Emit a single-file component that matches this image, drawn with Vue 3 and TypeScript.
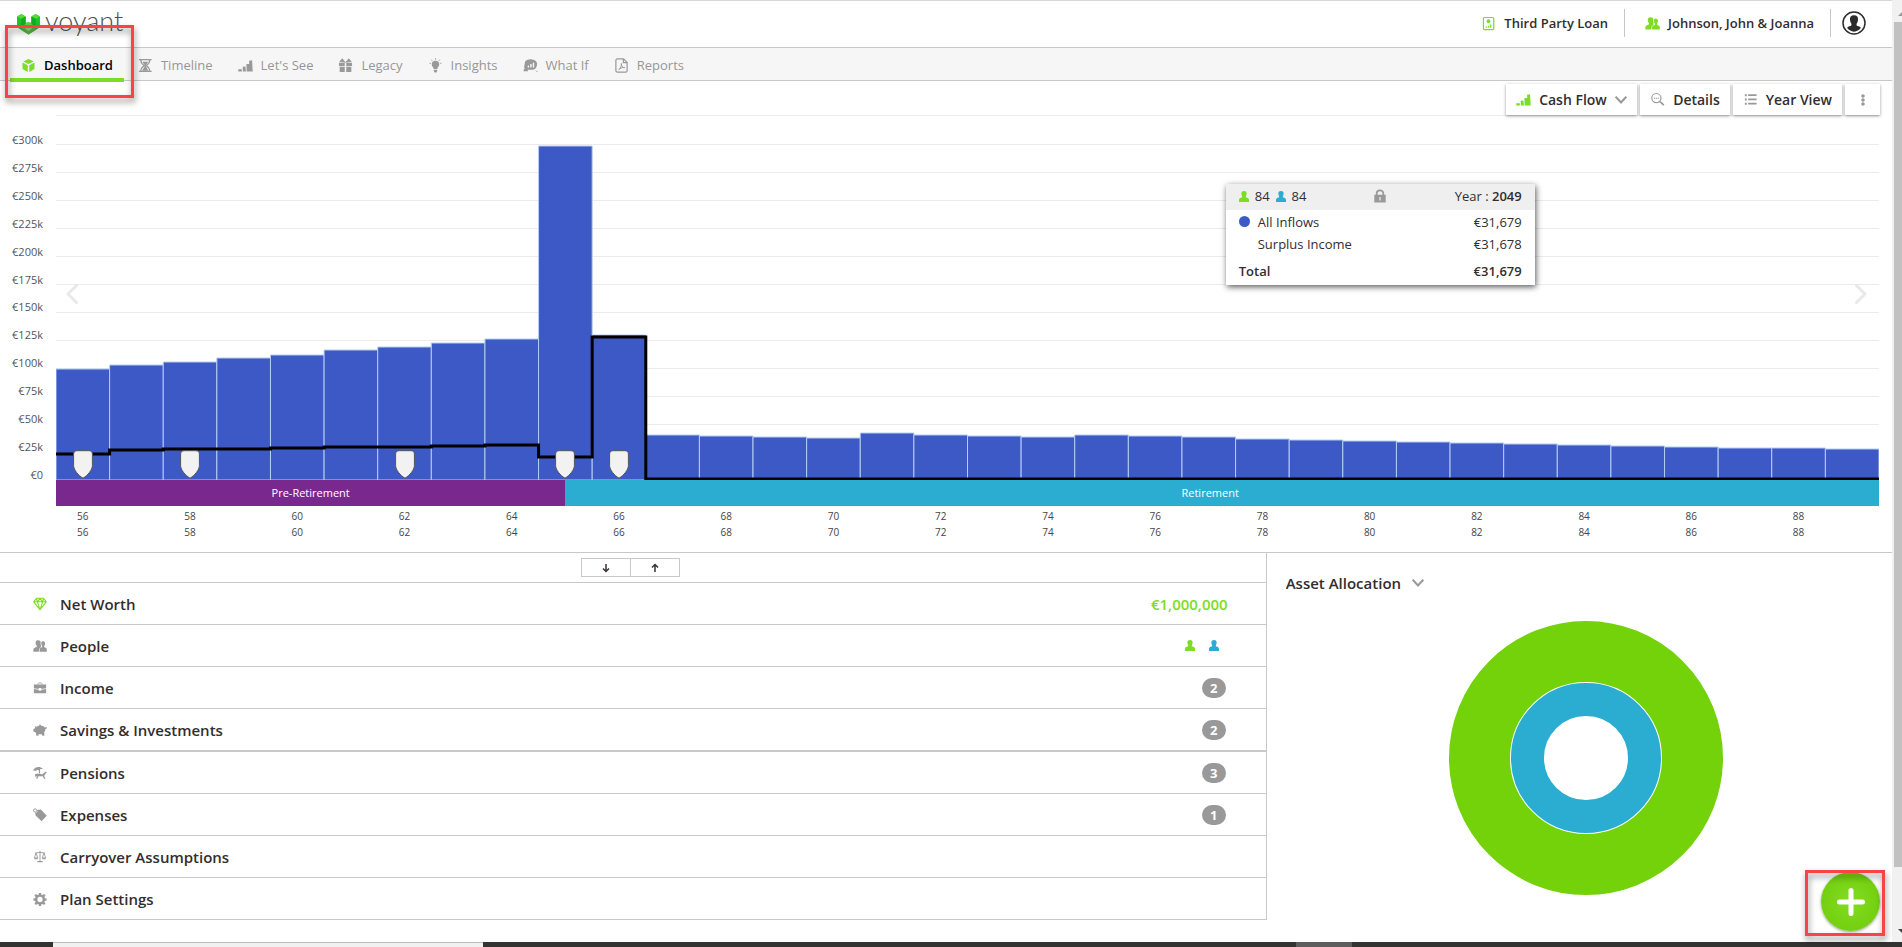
<script setup lang="ts">
import { ref } from 'vue'

interface NavItem { label: string; icon: string; active?: boolean }
interface PlanRow { label: string; icon: string; count?: number; worth?: string; people?: boolean; green?: boolean; heavy?: boolean }

const navItems: NavItem[] = [
  { label: 'Dashboard', icon: 'cube', active: true },
  { label: 'Timeline', icon: 'hourglass' },
  { label: "Let's See", icon: 'bars' },
  { label: 'Legacy', icon: 'gift' },
  { label: 'Insights', icon: 'bulb' },
  { label: 'What If', icon: 'whatif' },
  { label: 'Reports', icon: 'report' },
]

const rows: PlanRow[] = [
  { label: 'Net Worth', icon: 'gem', worth: '€1,000,000', green: true },
  { label: 'People', icon: 'people', people: true },
  { label: 'Income', icon: 'briefcase', count: 2 },
  { label: 'Savings & Investments', icon: 'piggy', count: 2, heavy: true },
  { label: 'Pensions', icon: 'beach', count: 3 },
  { label: 'Expenses', icon: 'tag', count: 1 },
  { label: 'Carryover Assumptions', icon: 'scales' },
  { label: 'Plan Settings', icon: 'gear' },
]

const axis = [300, 275, 250, 225, 200, 175, 150, 125, 100, 75, 50, 25, 0]
const firstAge = 56
const plotHeight = 365

// Height of each yearly bar above the base line, in chart units.
const inflows = [
  111, 115, 118, 122, 125, 130, 133, 137, 141, 334, 145, 45, 44, 43, 42, 47, 45,
  44, 43, 45, 44, 43, 41, 40, 39, 38, 37, 36, 35, 34, 33, 32, 32, 31,
]
const expenses = [26, 30, 31, 31, 32, 33, 33, 34, 35, 23, 143, ...Array(23).fill(1)] as number[]
const eventAges = [56, 58, 62, 65, 66]
const ages = Array.from({ length: 17 }, (_, i) => firstAge + i * 2)

const expensePath = expenses
  .map((v, i) => `${i ? 'L' : 'M'}${i} ${plotHeight - v} H${i + 1}`)
  .join(' ')

const markerLeft = (age: number) => `${((age - firstAge + 0.5) / inflows.length) * 100}%`

const view = ref('Cash Flow')
const breakdown = ref('Asset Allocation')
</script>

<template>
  <svg class="defs" aria-hidden="true">
    <symbol id="cube" viewBox="0 0 16 16"><path d="M8 1l5.6 2.6L8 6.400 2.400 3.600zM1.600 4.800l5.600 2.800v7.400l-5.600-3.200zM14.400 4.800v7L8.800 15V7.600z" /></symbol>
    <symbol id="hourglass" viewBox="0 0 16 16"><path fill="none" stroke="currentColor" stroke-width="1.300" d="M1 1.700h13.500M1 14.300h13.500M3 2c0 3.500 2 4.800 3.600 6C5 9.200 3 10.500 3 14M12.500 2c0 3.500-2 4.800-3.600 6 1.600 1.200 3.600 2.500 3.600 6" /><path d="M4.600 4h6.300L8.400 7.500 8.500 9l2.700 4.500H4.300L7 9V7.500z" /></symbol>
    <symbol id="bars" viewBox="0 0 16 16"><path d="M.3 12h3.800v2.300H.3zM5 9.300l3-.3.400 5.300H5.200zM9 6.500h3l.3 7.800H9.200zM11.800 3l3.200-.5.700 11.800h-3.400z" /></symbol>
    <symbol id="gift" viewBox="0 0 16 16"><path d="M1 5h6.200v3.400H1zM8.800 5H15v3.400H8.800zM1.800 9.400h5.400V15H1.800zM8.800 9.400h5.400V15H8.800z" /><path fill="currentColor" stroke="currentColor" stroke-width="1.200" d="M7 4.300L2.500 3.500 4.500 1.200zM9 4.300l4.500-.8-2-2.300z" /></symbol>
    <symbol id="bulb" viewBox="0 0 16 16"><path d="M8 3a4 4 0 0 1 4 4c0 2-1.700 2.500-2 4.700H6C5.700 9.500 4 9 4 7a4 4 0 0 1 4-4zM6.200 12.500h3.600v1.300L9 15.500H7l-.8-1.700z" /><path stroke="currentColor" d="M8 .3v1.500M3.400 1.800l1 1.200M12.600 1.800l-1 1.200M1.600 5.500l1.400.3M14.400 5.500l-1.400.3" /></symbol>
    <symbol id="whatif" viewBox="0 0 16 16"><path fill-rule="evenodd" d="M4.200 2.200Q8 .600 12 2.200q2.500.8 3 3.300.3 3-1.500 5.500-1 1.500-3 1.500h-6Q1.500 12 1.300 10 1 8 1.800 7 1.500 3.500 4.200 2.200zM5 10h1.500V8H5zm2.700 0h1.500V6.500H7.700zm2.700 0h1.500V5h-1.500z" /><path d="M1 11.500h3.500l1 2.500H.6zM13 13l2.700 1.300-.7 1z" /></symbol>
    <symbol id="report" viewBox="0 0 16 16"><path fill="none" stroke="currentColor" stroke-width="1.300" d="M3.500 1h6.700L14 4.800v8.700a1.500 1.500 0 0 1-1.500 1.500h-9A1.500 1.500 0 0 1 2 13.500v-11A1.500 1.500 0 0 1 3.500 1zM10 1v4h4" /><path fill="none" stroke="currentColor" d="M5 12.300c2-1.200 3.200-4 2.800-6.500C8 9 9.500 10.500 11.500 10.300c-2.500-.4-4.500.4-6.500 2z" /></symbol>
    <symbol id="gem" viewBox="0 0 16 16"><path fill="none" stroke="currentColor" stroke-width="1.200" stroke-linejoin="round" d="M4 1.500h8l3.200 4L8 14.500.8 5.500zM.8 5.500h14.400M5 5.500l3 9 3-9M4 1.500l1 4 3-4 3 4 1-4" /></symbol>
    <symbol id="people" viewBox="0 0 16 16"><path d="M9.300 7.200c-.6.9-.5 1.700.2 2.200-2.300.8-2.800 2-2.800 5.100H.4v-2.300c0-1.800 1-2.200 3.600-3.200.6-.5.400-1-.1-1.800C2 3.600 3.300 1.300 5.900 1.300c1.700 0 2.800.9 3 2.300-.6 1-.4 2.500.4 3.600z" /><path d="M11 2.600c2.600 0 3.500 2.400 2.200 4.900-.7 1-.5 1.600 0 2 1.700.7 2.600 1 2.600 2.700v2.300H7.500v-2.300c0-1.700.9-2 2.700-2.700.5-.4.500-1-.1-2C8.900 5 9.400 2.600 11 2.600z" /></symbol>
    <symbol id="person" viewBox="0 0 10 11"><path d="M5 0c1.900 0 2.900 1.300 2.600 3C7.400 4.400 6.800 5 6.800 6.200 9 6.800 10 7.300 10 9v2H0V9c0-1.700 1-2.200 3.200-2.800C3.200 5 2.600 4.400 2.400 3 2.100 1.300 3.100 0 5 0z" /></symbol>
    <symbol id="briefcase" viewBox="0 0 16 16"><path d="M1 4h14v4.200L9.500 9V8h-3v1L1 8.200zM1 9.200l5.500.8v1h3v-1l5.500-.8V14H1z" /><path fill="none" stroke="currentColor" d="M5.500 4c0-2.600 5-2.600 5 0" /></symbol>
    <symbol id="piggy" viewBox="0 0 16 16"><path d="M.3 7.500l2.200-1.800-.5-2 2.500.6C5.500 3.200 6.800 3 7 3l.8-2 1.700 2c2.500 0 4 1.300 4.300 3 .6-.3.400-1 .2-1.700l1.800.5c0 1.400-.6 2.200-1.700 2.400 0 1.500-.6 2.500-1.300 3.300l.2 4h-2.300l-.6-1.600H6.500L6 14.500H3.800l-.3-3.200C2.800 10.500 1.500 10 .5 9.700z" /></symbol>
    <symbol id="beach" viewBox="0 0 16 16"><path d="M0 5.500C1.500 1 7-.5 11.500 3L8 3.700 7 5 4.700 4.200 3.500 5.600 1.500 5zM6.800 4H8v4.500H6.800zM2.500 9.200c3-.7 5.500-.4 8.200.1L14.300 6.500l1.700.4-3.300 4.300 1.500 3.300h-1.500l-1.500-2.700H6l-.8 2.700H3.800l.6-2.800-2 .6z" /></symbol>
    <symbol id="tag" viewBox="0 0 16 16"><path d="M4.300 2.200L9 1.600l6.700 7.200-5.900 6.200L3 8.500l-.5-3.700 1.700.4 1-1z" /><circle cx="2.400" cy="2.800" r="1.900" fill="none" stroke="currentColor" /></symbol>
    <symbol id="scales" viewBox="0 0 16 16"><path fill="none" stroke="currentColor" d="M8 1v12M2 3.500l6-.8 6 .8M3.500 3.500L1.500 9M3.500 3.500l2 5.500M12.500 3.500l-2 5.500M12.500 3.500l2 5.500" /><path d="M1 8.700h5l-1 1.800H2zM10 8.700h5l-1 1.800h-3zM5 12.500h6V14H5z" /></symbol>
    <symbol id="gear" viewBox="0 0 16 16"><path fill-rule="evenodd" d="M6.800 1h2.400l.4 2 1.300.5 1.700-1.200 1.700 1.700-1.200 1.700.5 1.300 2 .4v2.300l-2 .4-.5 1.300 1.200 1.700-1.700 1.700-1.700-1.200-1.300.5-.4 2H6.800l-.4-2-1.300-.5-1.700 1.200-1.700-1.700 1.200-1.700-.5-1.300-2-.4V7.400l2-.4.5-1.300L1.700 4l1.700-1.700 1.700 1.200L6.400 3zM8 5.500a3 3 0 1 0 0 6 3 3 0 0 0 0-6z" /></symbol>
    <symbol id="plan" viewBox="0 0 16 16"><rect x="2.600" y="1.600" width="11" height="13" rx="1.200" fill="none" stroke="currentColor" stroke-width="1.300" /><circle cx="8" cy="5.500" r="2" /><path d="M5 12.500h1.400v-1.300H5zM7.300 12.500h1.400v-2.100H7.300zM9.600 12.500H11V9.100H9.600z" /></symbol>
    <symbol id="search" viewBox="0 0 16 16"><circle cx="6.800" cy="6.500" r="4.900" fill="none" stroke="currentColor" stroke-width="1.200" /><path stroke="currentColor" stroke-width="1.800" d="M10.700 10.200l4 3.700" /><path d="M4.200 6h1.300v1.300H4.200zM6.200 6h1.300v1.300H6.200zM8.200 6h1.300v1.300H8.200z" /></symbol>
    <symbol id="list" viewBox="0 0 16 16"><path d="M2 2.500h2v2H2zM5.500 2.500h9v1.700h-9zM2 7h2v2H2zM5.500 7h9v1.700h-9zM2 11.500h2v2H2zM5.500 11.500h9v1.700h-9z" /></symbol>
    <symbol id="dots" viewBox="0 0 16 16"><circle cx="8" cy="2.700" r="2.400" /><circle cx="8" cy="8" r="2.400" /><circle cx="8" cy="13.300" r="2.400" /></symbol>
    <symbol id="chevron" viewBox="0 0 12 12"><path fill="none" stroke="currentColor" stroke-width="2" d="M.7 2.700L6 8.500l5.300-5.800" /></symbol>
    <symbol id="lock" viewBox="0 0 16 16"><path fill-rule="evenodd" d="M1.500 6.500h13V15.500h-13zM7.300 9v4h1.400V9z" /><path fill="none" stroke="currentColor" stroke-width="2" d="M4.200 7V5.200c0-5 7.600-5 7.600 0V7" /></symbol>
  </svg>

  <div class="window">
    <div class="app">
      <header class="top">
        <a class="brand" href="#">
          <svg class="brand-mark" viewBox="0 0 24 22" aria-hidden="true">
            <path fill="#18c52b" d="M0 2.500L4.500 0 9 2.500V9l3 2 3-2V2.500L19.500 0 24 2.500V14l-12 7.500L0 14z" />
            <path fill="#54dc37" d="M0 2.500L4.500 0 9 2.500 4.500 5zM15 2.500L19.500 0 24 2.500 19.500 5zM5 11l7-3 7 3-7 4z" />
            <path fill="#0fae22" d="M4.500 5L9 2.500v8L4.500 13zM15 2.500L19.500 5v8L15 10.500z" />
            <path fill="#5fb24b" d="M5 12l7 3.500v6L5 17zM12 15.500l7-3.500v5l-7 4.500z" />
            <path fill="#8bdb72" d="M8 15l4-2 4 2-4 3z" />
          </svg>
          <span>voyant</span>
        </a>
        <div class="account">
          <a class="account-link" href="#"><svg class="icon green"><use href="#plan" /></svg>Third Party Loan</a>
          <a class="account-link" href="#"><svg class="icon green"><use href="#people" /></svg>Johnson, John &amp; Joanna</a>
          <button class="avatar" type="button" aria-label="Account">
            <svg viewBox="0 0 24 24"><circle cx="12" cy="12" r="11" fill="none" stroke="#2b2b2b" stroke-width="1.500" /><path fill="#2b2b2b" d="M12 4.200c3 0 4.400 2 4 4.700-.2 2-1.100 3-1.500 4 0 1.500.3 1.800 1.500 2.200 1.500.5 2.500 1 2.800 2A9 9 0 0 1 12 20.700a9 9 0 0 1-6.800-3.600c.3-1 1.300-1.500 2.800-2 1.200-.4 1.500-.7 1.500-2.200-.4-1-1.300-2-1.500-4-.4-2.700 1-4.700 4-4.700z" /></svg>
          </button>
        </div>
      </header>

      <nav class="nav">
        <a v-for="item in navItems" :key="item.label" href="#" class="nav-item" :class="{ active: item.active }">
          <svg class="icon"><use :href="`#${item.icon}`" /></svg>{{ item.label }}
        </a>
      </nav>

      <main>
        <section class="chart">
          <div class="tools">
            <label class="tool">
              <svg class="icon green"><use href="#bars" /></svg>
              <select v-model="view" aria-label="Chart"><option>Cash Flow</option></select>
              <svg class="chevron"><use href="#chevron" /></svg>
            </label>
            <button class="tool" type="button"><svg class="icon"><use href="#search" /></svg>Details</button>
            <button class="tool" type="button"><svg class="icon"><use href="#list" /></svg>Year View</button>
            <button class="tool more" type="button" aria-label="More"><svg class="icon small"><use href="#dots" /></svg></button>
          </div>

          <div class="axis">
            <span v-for="v in axis" :key="v">€{{ v }}{{ v ? 'k' : '' }}</span>
          </div>

          <div class="plot">
            <svg class="series" :viewBox="`0 0 ${inflows.length} ${plotHeight}`" preserveAspectRatio="none" aria-hidden="true">
              <g class="grid">
                <path d="M0 .5H34" />
                <path v-for="(v, i) in axis" :key="v" :d="`M0 ${29.5 + i * 28}H34`" />
              </g>
              <g class="bars">
                <rect v-for="(v, i) in inflows" :key="i" :x="i" :y="plotHeight - v" width="1" :height="v" />
              </g>
              <path class="expense" :d="expensePath" />
            </svg>
            <button v-for="age in eventAges" :key="age" class="marker" type="button" :style="{ left: markerLeft(age) }" :aria-label="`Events at ${age}`">
              <svg viewBox="0 0 20 29"><path d="M4 .7h12c2.200 0 3.400 1.300 3.400 3.300v11.500c0 4.500-4.900 10-9.400 12.700C5.500 25.500.600 20 .600 15.500V4C.600 2 2 .7 4 .7z" /></svg>
            </button>
            <button class="pager prev" type="button" aria-label="Earlier"><svg viewBox="0 0 12 20"><path d="M10.500 1.500L2 10l8.500 8.500" /></svg></button>
            <button class="pager next" type="button" aria-label="Later"><svg viewBox="0 0 12 20"><path d="M1.500 1.500L10 10l-8.500 8.500" /></svg></button>

            <div class="tip">
              <div class="tip-head">
                <span class="tip-ages">
                  <svg class="person green"><use href="#person" /></svg>84
                  <svg class="person blue"><use href="#person" /></svg>84
                </span>
                <svg class="lock"><use href="#lock" /></svg>
                <span class="tip-year">Year : <b>2049</b></span>
              </div>
              <table>
                <tbody>
                  <tr><th scope="row"><i class="dot"></i>All Inflows</th><td>€31,679</td></tr>
                  <tr><th scope="row"><i class="dot none"></i>Surplus Income</th><td>€31,678</td></tr>
                </tbody>
                <tfoot>
                  <tr><th scope="row">Total</th><td>€31,679</td></tr>
                </tfoot>
              </table>
            </div>
          </div>

          <div class="phases">
            <span class="phase pre">Pre-Retirement</span>
            <span class="phase post">Retirement</span>
          </div>
          <div class="ages">
            <span v-for="age in ages" :key="age" class="age">{{ age }}<br>{{ age }}</span>
          </div>
        </section>

        <div class="lower">
          <section class="plan">
            <div class="resize">
              <button type="button" aria-label="Move down"><svg viewBox="0 0 10 10"><path d="M5 1v7.500M2 5.500l3 3 3-3" /></svg></button>
              <button type="button" aria-label="Move up"><svg viewBox="0 0 10 10"><path d="M5 9V1.500M2 4.500l3-3 3 3" /></svg></button>
            </div>
            <button v-for="row in rows" :key="row.label" type="button" class="row" :class="{ heavy: row.heavy }">
              <svg class="icon" :class="{ green: row.green }"><use :href="`#${row.icon}`" /></svg>
              <span class="row-label">{{ row.label }}</span>
              <span v-if="row.worth" class="worth">{{ row.worth }}</span>
              <span v-if="row.people" class="row-people">
                <svg class="person green"><use href="#person" /></svg>
                <svg class="person blue"><use href="#person" /></svg>
              </span>
              <span v-if="row.count" class="count">{{ row.count }}</span>
            </button>
          </section>

          <section class="allocation">
            <label class="breakdown">
              <select v-model="breakdown" aria-label="Breakdown"><option>Asset Allocation</option></select>
              <svg class="chevron"><use href="#chevron" /></svg>
            </label>
            <svg class="donut" viewBox="0 0 274 274" aria-hidden="true">
              <circle cx="137" cy="137" r="106.500" stroke="#73d20a" stroke-width="61" />
              <circle cx="137" cy="137" r="58.500" stroke="#2bacd1" stroke-width="33" />
            </svg>
          </section>
        </div>
      </main>

      <button class="add" type="button" aria-label="Add"><svg viewBox="0 0 28 28"><path d="M14 2.500v23M2.500 14h23" /></svg></button>
      <div class="callout callout-nav"></div>
      <div class="callout callout-add"></div>
    </div>

    <div class="scrollbar" aria-hidden="true">
      <i class="arrow up"></i>
      <i class="thumb"></i>
      <i class="arrow down"></i>
    </div>
    <div class="taskbar" aria-hidden="true"><i class="task-start"></i><i class="task-search"></i><i class="task-fill"></i><i class="task-app"></i></div>
  </div>
</template>

<style>
body { margin: 0; background: #fff; }
</style>

<style scoped>
* { box-sizing: border-box; }
.defs { position: absolute; width: 0; height: 0; }
.window {
  display: grid;
  grid-template: 1fr 5px / 1fr 10px;
  min-height: 100vh;
  font: 15px/20px "Open Sans", "Noto Sans", sans-serif;
  color: #332d2e;
}
button, select { font: inherit; color: inherit; background: none; border: 0; padding: 0; margin: 0; }
select { appearance: none; outline: 0; }
a { color: inherit; text-decoration: none; }
svg { display: block; flex: none; fill: currentColor; }
.icon { width: 15px; height: 15px; color: #999; }
.icon.small { width: 12px; height: 12px; }
.green, .icon.green { color: #7ddc24; }
.blue { color: #2bacd1; }
.chevron { width: 12px; height: 12px; color: #999; }
.person { width: 10px; height: 11px; }
.app { position: relative; min-width: 0; border-top: 1px solid #d8d8d8; }

.top { display: flex; justify-content: space-between; height: 46px; padding: 0 26px 0 17px; }
.brand { display: flex; align-items: center; gap: 5px; height: 46px; color: #505154; font: 27px/30px Lato, sans-serif; font-weight: 300; }
.brand span { padding-bottom: 6px; }
.brand-mark { width: 23px; height: 21px; }
.account { display: flex; align-items: center; height: 44px; font-size: 13px; font-weight: 600; }
.account-link { display: flex; align-items: center; gap: 8px; height: 28px; padding: 0 16px 0 20px; border-right: 1px solid #c6c6c6; }
.avatar { width: 24px; height: 24px; margin-left: 11px; }

.nav { display: flex; gap: 3px; height: 34px; padding-left: 10px; background: #f6f6f6; border: solid #c8c8c8; border-width: 1px 0; font-size: 13px; color: #969696; }
.nav-item { display: flex; align-items: center; gap: 8px; height: 34px; padding: 4px 11px 0; border-bottom: 4px solid transparent; }
.nav-item.active { color: #000; font-weight: 600; border-color: #7ddc24; }
.nav-item.active .icon { color: #7ddc24; }

.chart { position: relative; display: grid; grid-template-columns: 56px 1fr; padding: 34px 13px 0 0; height: 471px; grid-template-rows: 365px 26px 1fr; }
.tools { position: absolute; z-index: 1; right: 12px; top: 3px; display: flex; gap: 3px; }
.tool { display: flex; align-items: center; gap: 8px; height: 31px; padding: 0 10px; background: #fff; font-weight: 600; font-size: 14px; box-shadow: 0 1px 3px rgba(0, 0, 0, .4); }
.tool.more { width: 35px; padding: 0; justify-content: center; }
.axis { display: flex; flex-direction: column; justify-content: space-between; height: 351px; margin-top: 17px; padding-right: 13px; text-align: right; font-size: 11px; line-height: 16px; color: #555; }
.plot { position: relative; }
.series { width: 100%; height: 365px; }
.series path, .series rect { vector-effect: non-scaling-stroke; }
.grid path { stroke: #ebebeb; }
.bars rect { fill: #3d59c6; stroke: #b4cdf2; stroke-width: 1; }
.expense { fill: none; stroke: #000; stroke-width: 3; }
.marker { position: absolute; bottom: 1px; width: 20px; height: 29px; margin-left: -10px; }
.marker svg { width: 20px; height: 29px; fill: #f2f2f2; stroke: #555; }
.pager { position: absolute; top: 169px; width: 12px; height: 20px; }
.pager svg { width: 12px; height: 20px; fill: none; stroke: #e9e9e9; stroke-width: 3; stroke-linecap: round; }
.prev { left: 10px; }
.next { right: 12px; }

.phases { grid-column: 2; display: flex; color: #fff; font-size: 11px; line-height: 26px; text-align: center; }
.pre { width: 27.94%; background: #79298e; }
.post { flex: 1; padding-right: 24px; background: #2bacd1; }
.ages { grid-column: 2; display: grid; grid-template-columns: repeat(34, 1fr); padding-top: 2px; font-size: 10px; line-height: 16px; text-align: center; color: #444; }
.age:nth-child(n) { grid-row: 1; grid-column-end: span 2; padding-right: 50%; }

.tip { position: absolute; left: 64%; top: 69px; width: 309px; margin-left: 3px; background: #fff; font-size: 13px; box-shadow: 1px 2px 6px rgba(0, 0, 0, .65); }
.tip-head { display: grid; grid-template-columns: 1fr auto 1fr; align-items: center; height: 26px; padding: 0 13px 2px; background: #efefef; }
.tip-ages { display: flex; align-items: center; gap: 6px; }
.tip-year { text-align: right; }
.tip-year b { font-weight: 600; }
.lock { width: 14px; height: 14px; color: #999; }
.tip table { width: 100%; border-spacing: 0; padding: 1px 13px 3px; }
.tip th, .tip td { padding: 1px 0; height: 22px; font-weight: 400; text-align: left; }
.tip td { text-align: right; }
.tip tfoot th, .tip tfoot td { padding-top: 6px; font-weight: 600; }
.dot { display: inline-block; width: 11px; height: 11px; margin-right: 8px; border-radius: 50%; background: #3d59c6; }
.dot.none { background: none; }

.lower { display: flex; border-top: 1px solid #c8c8c8; }
.plan { width: 66.95%; border-right: 1px solid #c8c8c8; }
.resize { display: flex; justify-content: center; height: 30px; padding: 5px 4px 5px 0; border-bottom: 1px solid #c8c8c8; }
.resize button { display: grid; place-items: center; width: 50px; border: 1px solid #c8c8c8; }
.resize button + button { margin-left: -1px; }
.resize svg { width: 10px; height: 10px; fill: none; stroke: #3b3236; stroke-width: 1.500; }
.row { display: flex; align-items: center; width: 100%; height: 42px; padding: 0 38px 0 33px; border-bottom: 1px solid #c8c8c8; font-weight: 600; text-align: left; }
.row.heavy { height: 43px; border-bottom-width: 2px; }
.row .icon { width: 14px; height: 14px; }
.row-label { flex: 1; padding-left: 13px; }
.worth { color: #7ddc24; }
.row-people { display: flex; gap: 14px; padding-right: 9px; }
.count { width: 24px; height: 20px; margin-right: 2px; border-radius: 10px; background: #999; color: #fff; font-size: 13px; font-weight: 700; text-align: center; }
.allocation { flex: 1; padding: 18px 6px 0 19px; }
.breakdown { display: flex; align-items: center; gap: 10px; width: max-content; height: 24px; font-weight: 600; }
.donut { width: 274px; height: 274px; margin: 26px auto 0; fill: none; }

.add { position: absolute; right: 12px; bottom: 11px; display: grid; place-items: center; width: 59px; height: 59px; border-radius: 50%; background: radial-gradient(#83dc24, #6dca06); box-shadow: 0 1px 3px rgba(0, 0, 0, .4); }
.add svg { width: 28px; height: 28px; stroke: #fff; stroke-width: 5; stroke-linecap: round; }
.callout { position: absolute; border: 3px solid #fb4343; pointer-events: none; filter: drop-shadow(1px 4px 3px rgba(0, 0, 0, .45)); }
.callout-nav { left: 5px; top: 24px; width: 129px; height: 73px; }
.callout-add { right: 7px; bottom: 6px; width: 80px; height: 66px; }

.scrollbar { display: flex; flex-direction: column; background: #f1f1f1; overflow: hidden; }
.thumb { flex: 1; margin: 6px 0 62px 2px; background: #c1c1c1; }
.arrow { margin-left: 6px; border: solid transparent; border-width: 5px; }
.up { margin-top: 6px; border-bottom-color: #999; border-top-width: 0; height: 10px; }
.down { border-top-color: #444; border-bottom-width: 0; margin-bottom: 8px; }
.taskbar { grid-column: 1 / -1; display: flex; background: #333431; }
.task-start { width: 53px; }
.task-search { width: 430px; background: #f1f1f1; border-top: 1px solid #bbb; }
.task-fill { width: 813px; }
.task-app { width: 56px; background: #5d5d5d; }
</style>
